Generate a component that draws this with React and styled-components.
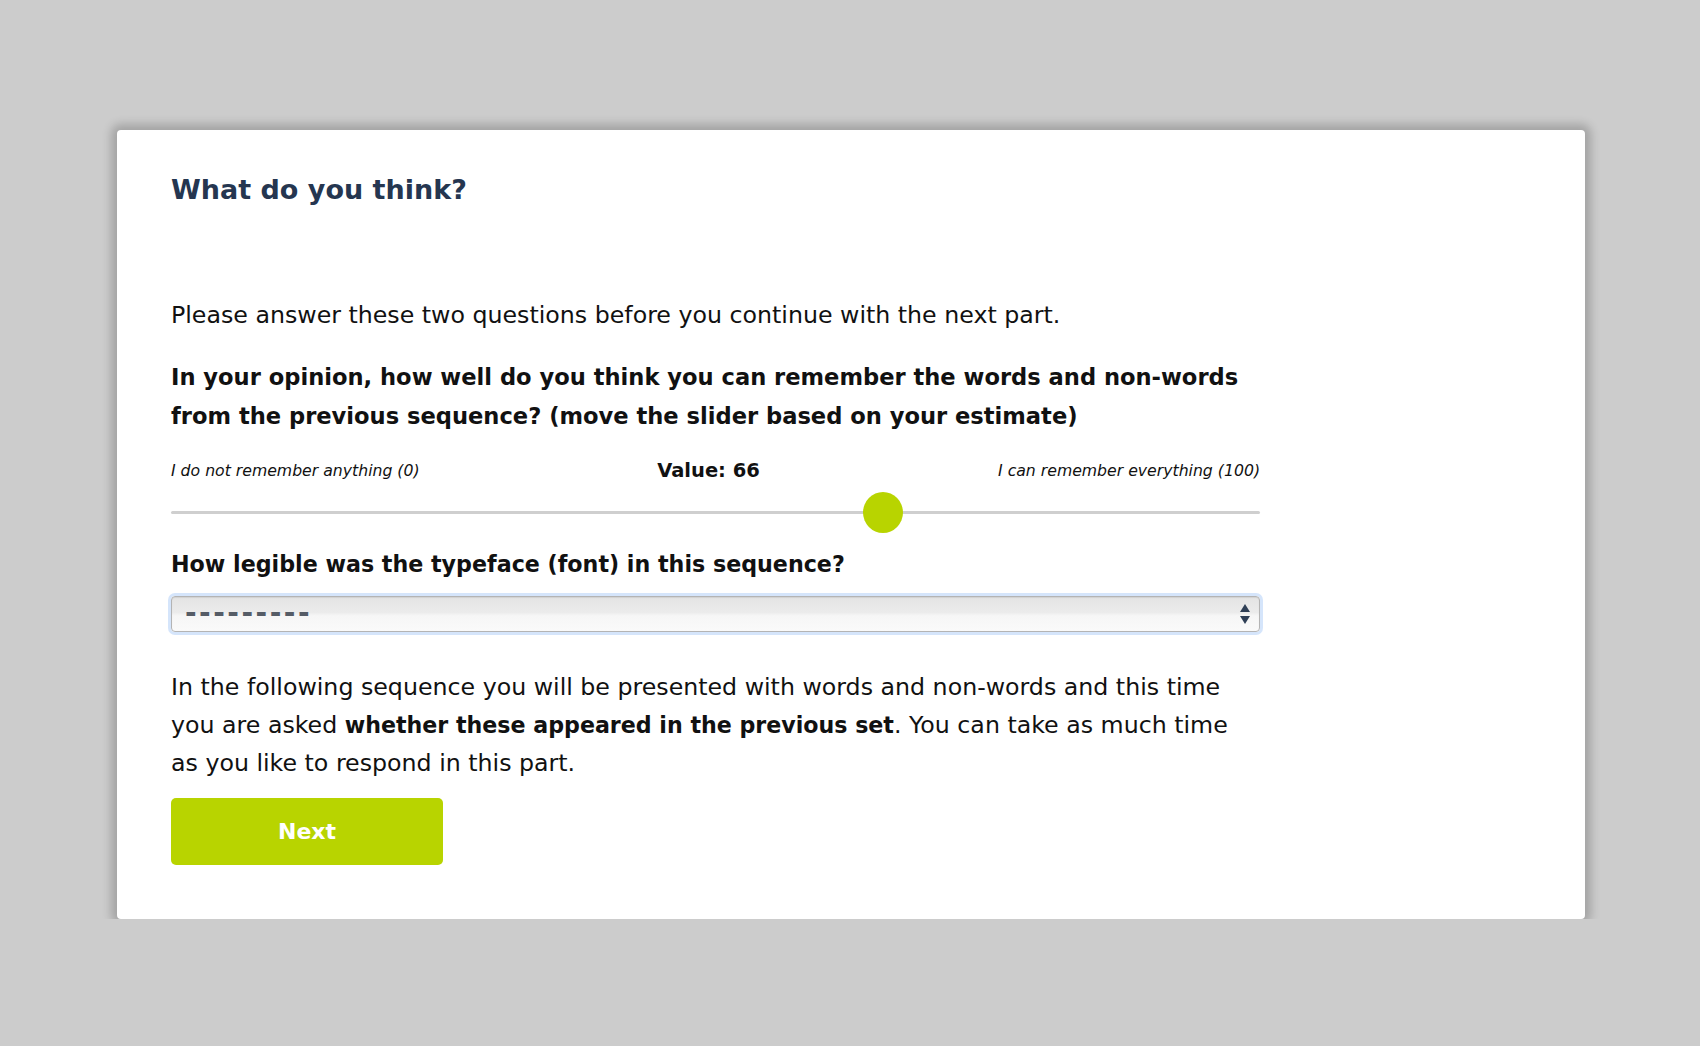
import { useState } from 'react';
import styled, { createGlobalStyle } from 'styled-components';

// Page defaults: grey backdrop, no body margin
const GlobalStyle = createGlobalStyle`
  body {
    margin: 0;
    background: #cccccc;
    font-family: 'DejaVu Sans', Verdana, sans-serif;
    color: #111;
  }
  * {
    box-sizing: border-box;
  }
`;

const Card = styled.main`
  width: 1468px;
  margin: 130px auto 0;
  padding: 40px 54px 54px;
  background: #fff;
  border-radius: 4px;
  box-shadow: 0 0 10px 6px rgba(0, 0, 0, 0.2);
  transform: translateX(1px);
`;

const Content = styled.div`
  width: 1089px;
`;

const Title = styled.h1`
  margin: 0 0 86px;
  font-size: 27px;
  line-height: 40px;
  font-weight: 700;
  color: #253650;
`;

const Text = styled.p`
  margin: ${(p) => p.$top || 0}px 0 0;
  font-size: 23.7px;
  line-height: 38px;
  font-weight: 400;

  strong {
    font-size: 0.935em;
    line-height: 1;
  }
`;

const Question = styled.h2`
  margin: ${(p) => p.$top || 0}px 0 0;
  font-size: ${(p) => p.$size || 22.6}px;
  line-height: 39px;
  font-weight: 700;
`;

// Slider block
const LabelRow = styled.div`
  display: grid;
  grid-template-columns: 1fr auto 1fr;
  align-items: center;
  margin-top: 22px;
  height: 24px;
`;

const EndLabel = styled.span`
  font-size: 15.7px;
  font-style: italic;
  text-align: ${(p) => p.$align};
`;

const ValueLabel = styled.span`
  font-size: 19.5px;
  font-weight: 700;
  padding-right: 14px;
`;

const SliderArea = styled.div`
  position: relative;
  margin-top: 10px;
  height: 41px;
  display: flex;
  align-items: center;
  cursor: pointer;
`;

const Track = styled.div`
  width: 100%;
  height: 3px;
  background: #cfcfcf;
  border-radius: 2px;
`;

const Thumb = styled.div`
  position: absolute;
  top: 0;
  width: 40px;
  height: 41px;
  border-radius: 50%;
  background: #b8d400;
`;

// Mac-ish select box with focus glow
const Select = styled.div`
  margin-top: 12px;
  height: 36px;
  display: flex;
  align-items: center;
  justify-content: space-between;
  padding: 0 8px 0 13px;
  border: 1px solid #b4b4b4;
  border-radius: 4px;
  background: linear-gradient(#e4e4e4 0%, #ebebeb 45%, #f6f6f6 55%, #fafafa 100%);
  box-shadow: 0 0 0 3px rgba(150, 190, 245, 0.4), inset 0 1px 1px rgba(0, 0, 0, 0.08);
`;

const Placeholder = styled.span`
  font-size: 28px;
  line-height: 28px;
  letter-spacing: 2.5px;
  color: #555c66;
  font-weight: 700;
  margin-top: -2px;
`;

const NextButton = styled.button`
  display: flex;
  align-items: center;
  justify-content: center;
  margin-top: 16px;
  width: 272px;
  height: 67px;
  border: none;
  border-radius: 5px;
  background: #b8d400;
  color: #fff;
  font-family: 'DejaVu Sans', Verdana, sans-serif;
  font-size: 22px;
  font-weight: 700;
  cursor: pointer;
`;

function Arrows() {
  return (
    <svg width="12" height="22" viewBox="0 0 12 22">
      <path d="M6 1 L11 9 L1 9 Z" fill="#2f3f56" />
      <path d="M6 21 L11 13 L1 13 Z" fill="#2f3f56" />
    </svg>
  );
}

function App() {
  const [value] = useState(66);

  return (
    <>
      <GlobalStyle />
      <Card>
        <Content>
          <Title>What do you think?</Title>
          <Text>Please answer these two questions before you continue with the next part.</Text>
          <Question $top={24}>
            In your opinion, how well do you think you can remember the words and non-words
            <br />
            from the previous sequence? (move the slider based on your estimate)
          </Question>

          <LabelRow>
            <EndLabel $align="left">I do not remember anything (0)</EndLabel>
            <ValueLabel>Value: {value}</ValueLabel>
            <EndLabel $align="right">I can remember everything (100)</EndLabel>
          </LabelRow>
          <SliderArea>
            <Track />
            <Thumb style={{ left: `calc((100% - 40px) * ${value / 100})` }} />
          </SliderArea>

          <Question $top={12} $size={22.2}>
            How legible was the typeface (font) in this sequence?
          </Question>
          <Select>
            <Placeholder>---------</Placeholder>
            <Arrows />
          </Select>

          <Text $top={36}>
            In the following sequence you will be presented with words and non-words and this time
            <br />
            you are asked <strong>whether these appeared in the previous set</strong>. You can take
            as much time
            <br />
            as you like to respond in this part.
          </Text>
          <NextButton>Next</NextButton>
        </Content>
      </Card>
    </>
  );
}

export default App;
